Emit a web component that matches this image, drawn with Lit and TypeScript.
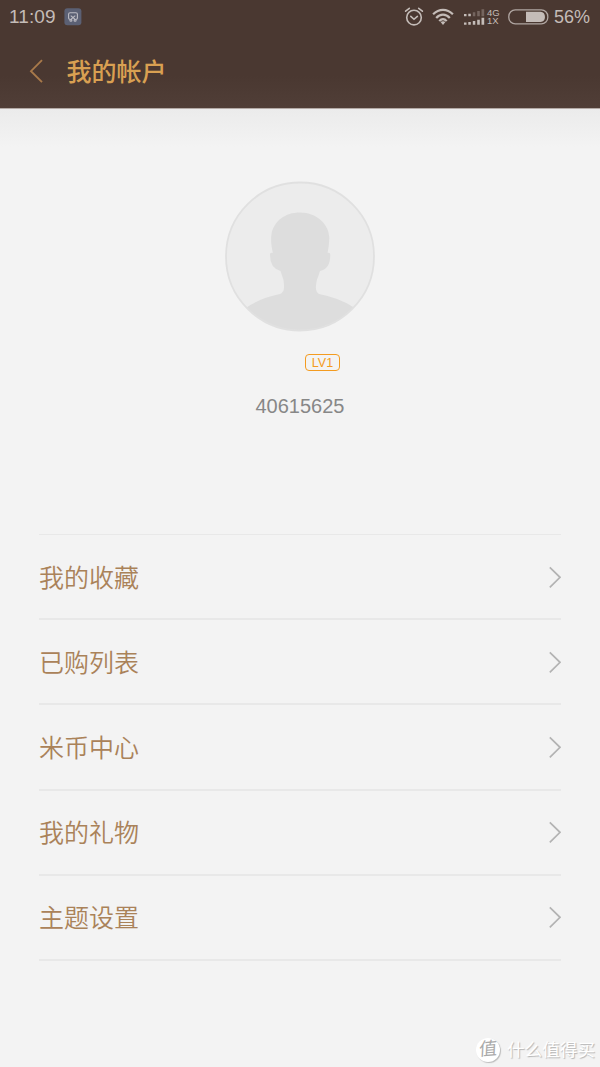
import { LitElement, html, css } from "lit";
import { customElement, property } from "lit/decorators.js";

@customElement("status-bar")
class StatusBar extends LitElement {
  static styles = css`
    :host { display: flex; height: 34px; align-items: center; color: #c4bcb8; font-size: 19px; line-height: 34px; padding: 0 10px 0 9px; box-sizing: border-box; }
    svg { display: block; flex: none; }
    .time { width: 47px; letter-spacing: 0.1px; }
    .app { margin-left: 8px; }
    .alarm { margin-left: auto; }
    .wifi { margin-left: 8px; }
    .signal { margin-left: 9px; }
    .net { display: flex; flex-direction: column; margin-left: 2px; width: 13px; font-size: 9.5px; line-height: 8px; }
    .battery { margin-left: 8px; }
    .percent { margin-left: 5px; width: 36px; font-size: 18px; }
  `;
  render() {
    return html`
      <span class="time">11:09</span>
      <svg class="app" width="18" height="18" viewBox="0 0 18 18">
        <rect x="0.4" y="0.2" width="17" height="17" rx="3" fill="#5b6074" />
        <g fill="none" stroke="#bdbcc3" stroke-width="1.1">
          <path d="M6 11.2h-.4q-1-.2-1-1.2V6.300q0-1.500 1.500-1.500h5.800q1.500 0 1.500 1.500V10q0 1-1 1.200h-.4" />
          <path d="M6.700 7.600 10.700 11M11.300 7.600 7.300 11" />
          <circle cx="6.900" cy="12.200" r="1" /><circle cx="11.100" cy="12.200" r="1" />
        </g>
      </svg>
      <svg class="alarm" width="20" height="20" viewBox="0 0 20 20" fill="none" stroke="#c4bcb8" stroke-width="1.600" stroke-linecap="round">
        <circle cx="10" cy="10.600" r="7.300" />
        <path d="M6.800 9.400 10 12.300l3.400-2.900M1.600 4.200 5.300 1.300M18.400 4.200l-3.700-2.900" />
      </svg>
      <svg class="wifi" width="22" height="18" viewBox="0 0 22 18" fill="none" stroke="#c4bcb8" stroke-width="2.200">
        <path d="M1.100 6.300Q5.500 1.900 11 1.900T20.900 6.300M4.200 9.900Q7.200 6.600 11 6.600T17.800 9.900M7.300 13.100Q9 11.100 11 11.100T14.700 13.100" />
        <path d="M8.600 14.100Q11 12.500 13.400 14.100L11 16.900Z" fill="#c4bcb8" stroke="none" />
      </svg>
      <svg class="signal" width="22" height="17" viewBox="0 0 22 17" fill="#c4bcb8">
        <path d="M1 5h2.500v2.200H1zM5.300 4.800h2.500v2.400H5.300zM1 13.500h2.500v2.200H1zM5.300 13h2.500v2.700H5.300zM9.800 12h2.500v3.700H9.800zM14.200 10.700h2.600v5h-2.600zM18.500 8.800h2.700v6.900h-2.700z" />
        <path d="M9.800 3.300h2.500v3.900H9.800zM14.200 2h2.600v5.200h-2.600zM18.500.3h2.700v6.900h-2.700z" fill="#75655f" />
      </svg>
      <span class="net"><span>4G</span><span>1X</span></span>
      <svg class="battery" width="41" height="16" viewBox="0 0 41 16">
        <rect x="0.800" y="0.900" width="39" height="14" rx="6.500" fill="none" stroke="#b0a6a2" stroke-width="1.300" />
        <path d="M18 2.800h14.500a5.200 5.200 0 0 1 0 10.300H18z" fill="#c4bcb8" />
      </svg>
      <span class="percent">56%</span>
    `;
  }
}

@customElement("menu-row")
class MenuRow extends LitElement {
  @property() label = "";
  static styles = css`
    :host { display: flex; align-items: center; justify-content: space-between; height: 85.200px; box-sizing: border-box; border-bottom: 2px solid #e8e8e8; color: #aa8259; font-size: 25px; font-weight: 350; }
    .label { line-height: 36px; padding-top: 2.300px; }
    svg { display: block; }
  `;
  render() {
    return html`
      <span class="label">${this.label}</span>
      <svg width="13" height="22" viewBox="0 0 13 22" fill="none" stroke="#b3b3b3" stroke-width="1.700"><path d="M1.800 1.300 12 11.300 1.800 21.300" /></svg>
    `;
  }
}

@customElement("app-root")
class AppRoot extends LitElement {
  private items = ["我的收藏", "已购列表", "米币中心", "我的礼物", "主题设置"];
  static styles = css`
    :host { display: flex; flex-direction: column; height: 1067px; overflow: hidden; background: #f3f3f3; font-family: "Liberation Sans", "Noto Sans CJK SC", sans-serif; }
    svg { display: block; flex: none; }
    .top { flex: none; height: 109px; box-sizing: border-box; border-bottom: 1px solid #b3aaa6; background: linear-gradient(#4a3831 0, #4a3831 70%, #503e37 100%); }
    .nav { display: flex; align-items: center; height: 74px; padding-left: 29px; color: #d9a052; }
    .title { margin: 2px 0 0 22.500px; font-size: 25px; font-weight: 500; line-height: 36px; }
    .profile { flex: none; height: 425px; box-sizing: border-box; padding-top: 72px; display: flex; flex-direction: column; align-items: center; background: linear-gradient(#ebebeb, #f3f3f3 38px); }
    .level { box-sizing: border-box; width: 35px; height: 17px; margin: 22px 0 0 45px; border: 1px solid #f39b20; border-radius: 4px; color: #f39b20; font-size: 12.500px; line-height: 16px; text-align: center; }
    .account { margin-top: 23px; font-size: 20px; line-height: 24px; color: #878787; }
    .menu { flex: none; margin: 0 39px; border-top: 1px solid #e8e8e8; }
    .mark { display: flex; align-items: center; justify-content: flex-end; margin-top: auto; padding: 0 5px 4px 0; gap: 6px; font-size: 17.600px; line-height: 26px; color: #fff; text-shadow: 1px 1px 1px #b4b4b4; }
    .seal { width: 24px; height: 24px; margin-right: 1px; border-radius: 50%; background: #fff; color: #aaa; font-size: 18px; line-height: 23px; text-align: center; text-shadow: none; box-shadow: 1px 1px 1px #bbb; }
    .glyph { display: block; transform: skewX(-8deg) rotate(-5deg); }
  `;
  render() {
    return html`
      <header class="top">
        <status-bar></status-bar>
        <div class="nav">
          <svg width="15" height="24" viewBox="0 0 15 24" fill="none" stroke="#a8794a" stroke-width="1.900"><path d="M13 1.200 2 12.200 13 23.200" /></svg>
          <span class="title">我的帐户</span>
        </div>
      </header>
      <section class="profile">
        <svg width="150" height="151" viewBox="0 0 150 151">
          <defs><clipPath id="disc"><circle cx="75" cy="75.500" r="74" /></clipPath></defs>
          <circle cx="75" cy="75.500" r="74" fill="#ececec" />
          <path clip-path="url(#disc)" fill="#dddddd" d="M75 31.500C93 31.500 105 45 104.300 58Q104 65 102.600 71.800Q105.500 71.200 105.300 74Q105.300 88 95 90Q93.500 95 92 98.500C90.500 106 90 110.500 94 113Q115 117 129 126.500L150 151H0L21.500 126.500Q35 117 55 113C60.500 110.500 59 104 58.500 99L55.500 90Q45 87 45 74Q44.500 71 47.800 72C46.500 65 45.500 60 46.500 53C49 40 60 31.500 75 31.500Z" />
          <circle cx="75" cy="75.500" r="74" fill="none" stroke="#e0e0e0" stroke-width="1.800" />
        </svg>
        <span class="level">LV1</span>
        <span class="account">40615625</span>
      </section>
      <nav class="menu">${this.items.map((item) => html`<menu-row .label=${item}></menu-row>`)}</nav>
      <footer class="mark">
        <span class="seal"><span class="glyph">值</span></span>
        <span>什么值得买</span>
      </footer>
    `;
  }
}
